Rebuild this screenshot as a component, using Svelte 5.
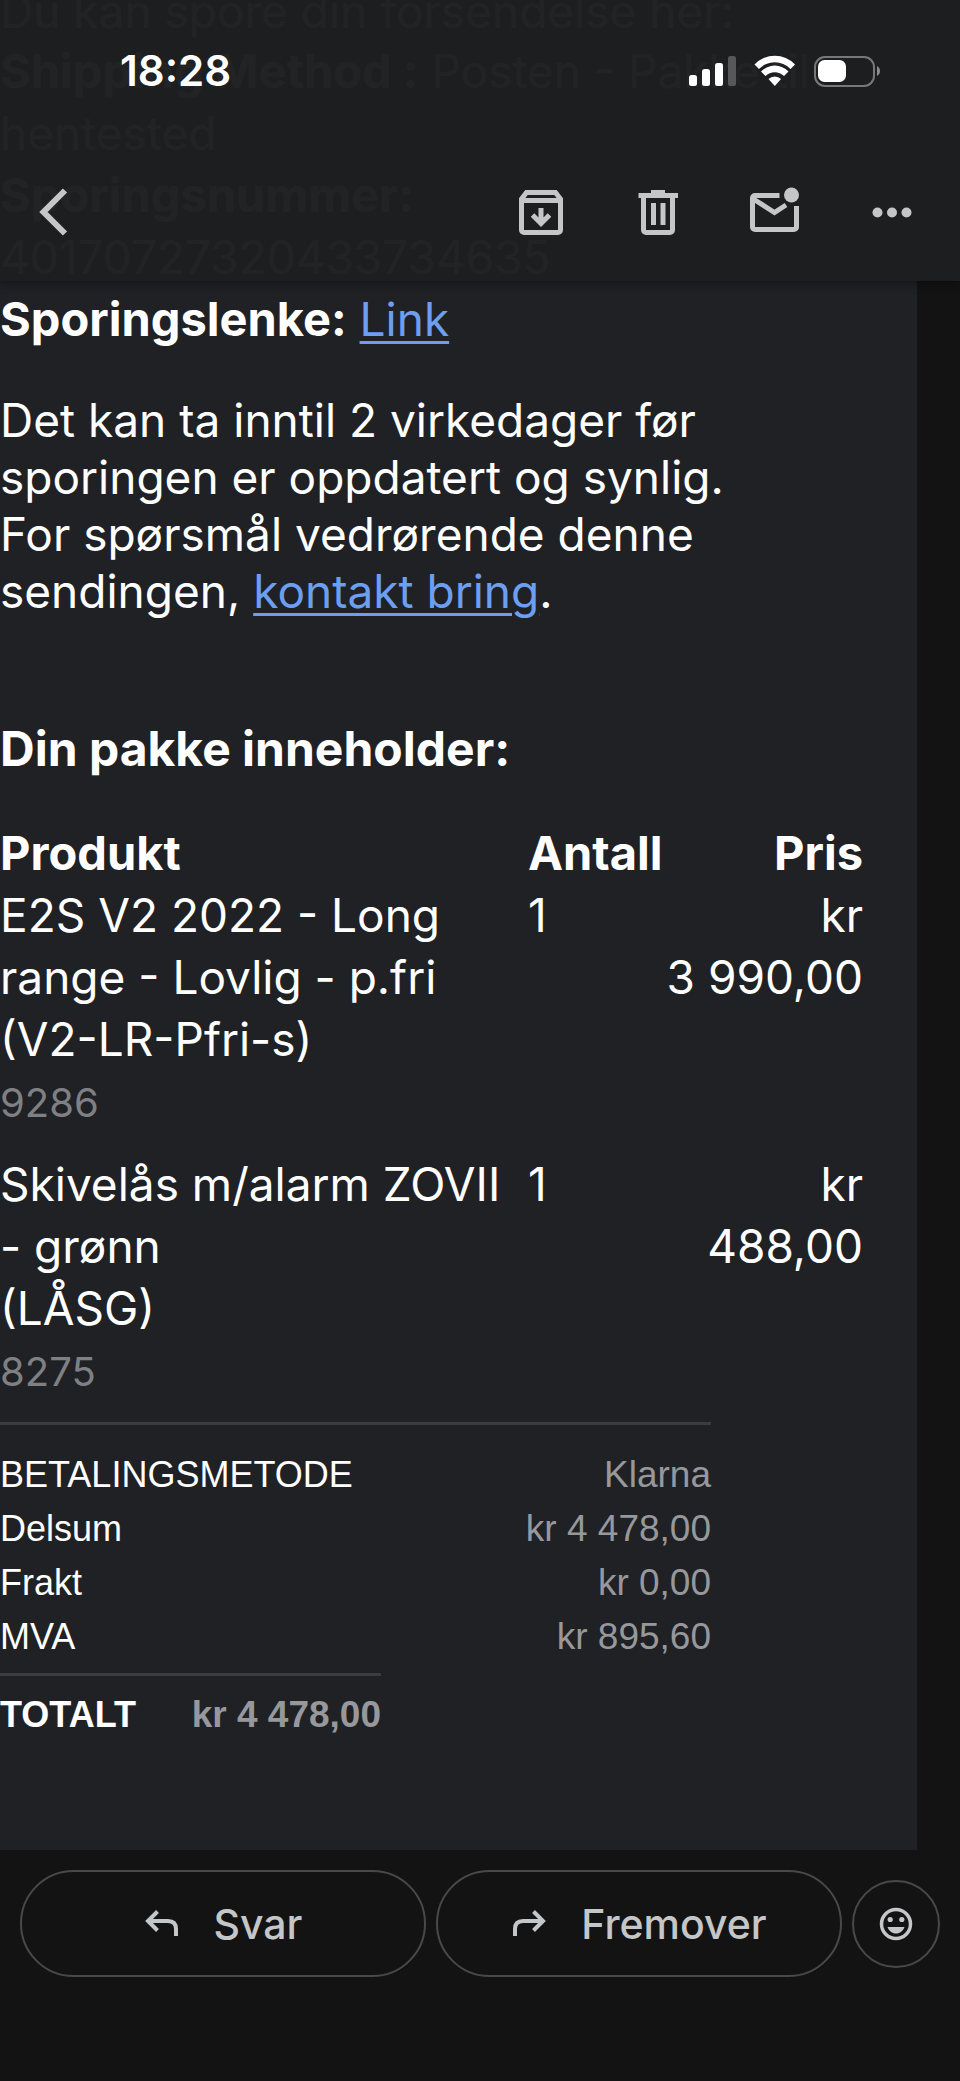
<script>
	const products = [
		{ name: 'E2S V2 2022 - Long range - Lovlig - p.fri', code: 'V2-LR-Pfri-s', sku: '9286', count: 1, price: '3\u00a0990,00' },
		{ name: 'Skivelås m/alarm ZOVII - grønn', code: 'LÅSG', sku: '8275', count: 1, price: '488,00' }
	];

	const summary = [
		['BETALINGSMETODE', 'Klarna'],
		['Delsum', 'kr 4 478,00'],
		['Frakt', 'kr 0,00'],
		['MVA', 'kr 895,60']
	];
</script>

<div class="screen">
	<header>
		<div class="status">
			<time>18:28</time>
			<svg width="192" height="32" viewBox="0 0 192 32" fill="#fff" aria-hidden="true">
				<rect x="1" y="20" width="8" height="11" rx="2.5" />
				<rect x="14" y="14" width="8" height="17" rx="2.5" />
				<rect x="27" y="8" width="8" height="23" rx="2.5" />
				<rect x="40" y="1" width="8" height="30" rx="2.5" fill="#57585a" />
				<path d="M66.500 9.500A28 28 0 0 1 107 9.500L102.500 14A22 22 0 0 0 71 14Z" />
				<path d="M73 16.500A19 19 0 0 1 100.500 16.500L96 21A13 13 0 0 0 77.500 21Z" />
				<path d="M80.500 24A9 9 0 0 1 93 24L86.800 31Z" />
				<rect x="127" y="2" width="59" height="29" rx="10" fill="none" stroke="#77787a" stroke-width="2" />
				<rect x="130" y="5" width="28" height="22" rx="6.500" />
				<path d="M189 11C193 13 193 19 189 21Z" fill="#8b8c8e" />
			</svg>
		</div>
		<nav>
			<button class="back" aria-label="Tilbake">
				<svg width="60" height="60" viewBox="0 0 60 60" fill="none" stroke="#c4c6c8" stroke-width="6">
					<path d="M41 8.500 19.500 30 41 51.500" />
				</svg>
			</button>
			<button aria-label="Arkiver">
				<svg width="60" height="60" viewBox="0 0 60 60" fill="none" stroke="#c4c6c8" stroke-width="5">
					<path d="M10.500 17 15.500 10.500H44.500L49.500 17V48A2.500 2.500 0 0 1 47 50.500H13A2.500 2.500 0 0 1 10.500 48ZM10.500 18.500H49.500" />
					<path d="M30 26V41M21.500 33 30 41.500 38.500 33" />
				</svg>
			</button>
			<button aria-label="Slett">
				<svg width="60" height="60" viewBox="0 0 60 60" fill="none" stroke="#c4c6c8" stroke-width="5">
					<path d="M10.500 13.500H50M23 10.500H37M15.500 14V48A2.500 2.500 0 0 0 18 50.500H42A2.500 2.500 0 0 0 44.500 48V14M25.500 21V43M35 21V43" />
				</svg>
			</button>
			<button aria-label="Merk som ulest">
				<svg width="60" height="60" viewBox="0 0 60 60" fill="none" stroke="#c4c6c8" stroke-width="5">
					<path d="M34.500 13.500H10A2.500 2.500 0 0 0 7.500 16V45A2.500 2.500 0 0 0 10 47.500H49A2.500 2.500 0 0 0 51.500 45V24" />
					<path d="M7.500 16.500 29.500 30.500 41 23" />
					<circle cx="46.500" cy="13" r="7.500" fill="#c4c6c8" stroke="none" />
				</svg>
			</button>
			<button aria-label="Flere valg">
				<svg width="60" height="60" viewBox="0 0 60 60" fill="#c4c6c8">
					<circle cx="15.500" cy="30.500" r="5" />
					<circle cx="30" cy="30.500" r="5" />
					<circle cx="44.500" cy="30.500" r="5" />
				</svg>
			</button>
		</nav>
	</header>

	<main>
		<p class="intro">Du kan spore din forsendelse her:</p>
		<p>
			<b>Shipping Method :</b> Posten - Pakke til<br>hentested<br>
			<b>Sporingsnummer:</b><br>40170727320433734635<br>
			<b>Sporingslenke:</b> <a href="#link">Link</a>
		</p>
		<p class="note">
			Det kan ta inntil 2 virkedager før<br>sporingen er oppdatert og synlig.<br>
			For spørsmål vedrørende denne<br>sendingen, <a href="#bring">kontakt bring</a>.
		</p>

		<h2>Din pakke inneholder:</h2>

		<table class="products">
			<thead>
				<tr><th class="name">Produkt</th><th class="count">Antall</th><th class="price">Pris</th></tr>
			</thead>
			<tbody>
				{#each products as p}
					<tr>
						<td>{p.name}<br>({p.code})<span class="sku">{p.sku}</span></td>
						<td>{p.count}</td>
						<td class="price">kr<br>{p.price}</td>
					</tr>
				{/each}
			</tbody>
		</table>

		<table class="summary">
			<tbody>
				{#each summary as [label, value]}
					<tr><th>{label}</th><td>{value}</td></tr>
				{/each}
			</tbody>
		</table>

		<table class="summary total">
			<tbody>
				<tr><th>TOTALT</th><td>kr 4 478,00</td></tr>
			</tbody>
		</table>
	</main>

	<footer>
		<button class="pill">
			<svg width="36" height="36" viewBox="0 0 36 36" fill="none" stroke="#c4c6c8" stroke-width="4">
				<path d="M13.500 5.500 4 15 13.500 24.500M4 15H24Q32 15 32 23V30" />
			</svg>
			Svar
		</button>
		<button class="pill">
			<svg width="36" height="36" viewBox="0 0 36 36" fill="none" stroke="#c4c6c8" stroke-width="4">
				<path d="M22.500 5.500 32 15 22.500 24.500M32 15H12Q4 15 4 23V30" />
			</svg>
			Fremover
		</button>
		<button class="emoji" aria-label="Legg til reaksjon">
			<svg width="34" height="34" viewBox="0 0 34 34" fill="#c4c6c8">
				<circle cx="17" cy="17" r="14.500" fill="none" stroke="#c4c6c8" stroke-width="3.500" />
				<circle cx="11.200" cy="12.500" r="2.600" />
				<circle cx="22.800" cy="12.500" r="2.600" />
				<path d="M8.500 20H25.500C24 24 21 26.500 17 26.500S10 24 8.500 20Z" />
			</svg>
		</button>
	</footer>
</div>

<style>
	:global(body) {
		margin: 0;
		background: #131313;
	}
	.screen {
		position: relative;
		min-height: 100vh;
		overflow: hidden;
		color: #fff;
		font-family: Inter, "Liberation Sans", sans-serif;
		font-size: 46px;
		line-height: 62px;
	}
	button {
		padding: 0;
		border: 0;
		background: none;
		color: #c4c6c8;
		display: flex;
		align-items: center;
		justify-content: center;
	}
	svg { display: block; }

	header {
		position: absolute;
		z-index: 2;
		top: 0;
		left: 0;
		right: 0;
		background: rgba(30, 31, 33, .98);
		box-shadow: 0 2px 10px rgba(0, 0, 0, .45);
	}
	.status {
		display: flex;
		align-items: center;
		justify-content: space-between;
		height: 142px;
		padding: 0 80px 0 120px;
	}
	time {
		font-size: 42px;
		font-weight: 600;
	}
	nav {
		display: flex;
		height: 139px;
		padding: 0 10px 0 0;
	}
	nav button { width: 117px; }
	.back {
		width: 108px;
		margin-right: auto;
	}

	main {
		box-sizing: border-box;
		width: 917px;
		max-width: 100%;
		margin-top: -17px;
		padding: 0 54px 108px 0;
		background: #202125;
	}
	p, h2 { margin: 0; }
	b { font-size: 47px; }
	a {
		color: #6c9ef2;
		text-decoration-thickness: 3px;
		text-underline-offset: 5px;
	}
	.intro { line-height: 57px; }
	.note {
		margin: 42px 0 98px;
		line-height: 57px;
	}
	h2 {
		margin-bottom: 42px;
		font-size: 48px;
		font-weight: 700;
	}

	table { border-collapse: collapse; }
	th, td {
		padding: 0;
		text-align: left;
		vertical-align: top;
	}
	.products {
		width: 100%;
		table-layout: fixed;
	}
	.products th { font-size: 47px; }
	.products td { padding-bottom: 19px; }
	.name { width: 528px; }
	.count { width: 134px; }
	.products .price { text-align: right; }
	.sku {
		display: block;
		margin-top: 2px;
		color: #7f8083;
		font-size: 40px;
	}

	.summary {
		width: 711px;
		border-top: 3px solid #3b3c40;
		border-collapse: separate;
		border-spacing: 0;
		padding: 23px 0 9px;
		font-family: "Liberation Sans", Arial, sans-serif;
		font-size: 36px;
		line-height: 54px;
	}
	.summary th { font-weight: 400; }
	.summary td {
		color: #97989c;
		font-size: 37px;
		text-align: right;
	}
	.total {
		width: 381px;
		padding: 12px 0 0;
	}
	.total th, .total td { font-weight: 700; }

	footer {
		display: grid;
		grid-template-columns: 1fr 1fr 88px;
		align-items: center;
		gap: 10px;
		padding: 20px 20px 103px;
	}
	footer button { border: 2px solid #484949; }
	.pill {
		gap: 34px;
		height: 107px;
		border-radius: 54px;
		font-family: Inter, "Open Sans", sans-serif;
		font-size: 41px;
		font-weight: 500;
	}
	.emoji {
		height: 88px;
		border-radius: 50%;
	}
</style>
